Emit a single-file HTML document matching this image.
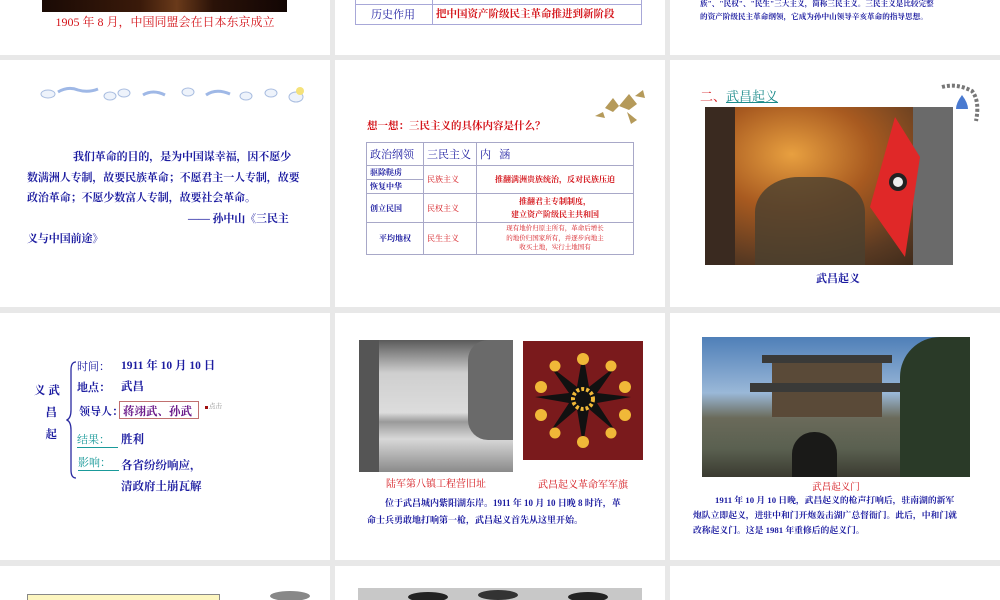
<!DOCTYPE html>
<html><head><meta charset="utf-8"><style>
*{margin:0;padding:0;box-sizing:border-box}
body{width:1000px;height:600px;background:#e8e8e8;position:relative;overflow:hidden;font-family:"Liberation Serif","Noto Serif CJK SC",serif}
.s{position:absolute;background:#fff;overflow:hidden}
.a{position:absolute;white-space:nowrap}
.b{font-weight:bold;color:#1c1ca0}
.r{color:#d4141a}
table{border-collapse:collapse;position:absolute}
td{border:1px solid #a8a8c8;padding:0 3px}
</style></head><body>
<!-- row 1 -->
<div class="s" style="left:0;top:0;width:330px;height:55px">
<div class="a" style="left:42px;top:0;width:245px;height:12px;background:linear-gradient(90deg,#1a0a05,#3a1a0a 40%,#6a3a1a 55%,#2a1208 70%,#120604)"></div>
<div class="a r" style="left:0;width:330px;text-align:center;top:13px;font-size:12px">1905 年 8 月，中国同盟会在日本东京成立</div>
</div>
<div class="s" style="left:335px;top:0;width:330px;height:55px">
<div class="a" style="left:20px;top:-2px;width:287px;height:27px;border:1px solid #a8a8d8"></div>
<div class="a" style="left:20px;top:4px;width:287px;border-top:1px solid #a8a8d8"></div>
<div class="a" style="left:97px;top:-2px;height:27px;border-left:1px solid #a8a8d8"></div>
<div class="a" style="left:36px;top:6px;font-size:11px;color:#1c1ca0">历史作用</div>
<div class="a r" style="left:101px;top:6px;font-size:10.5px;font-weight:bold">把中国资产阶级民主革命推进到新阶段</div>
</div>
<div class="s" style="left:670px;top:0;width:330px;height:55px">
<div class="a b" style="left:30px;top:-2px;font-size:7.6px;line-height:12.5px">族"、"民权"、"民生"三大主义，简称三民主义。三民主义是比较完整<br>的资产阶级民主革命纲领，它成为孙中山领导辛亥革命的指导思想。</div>
</div>
<!-- row 2 -->
<div class="s" style="left:0;top:60px;width:330px;height:247px">
<svg class="a" style="left:38px;top:22px" width="272" height="22">
<g fill="#eef3fb" stroke="#a9bde0" stroke-width="1">
<ellipse cx="10" cy="12" rx="7" ry="4"/><path d="M20 10 q10 -6 20 -2 q10 3 20 -1" fill="none" stroke="#9fb8e6" stroke-width="3"/>
<ellipse cx="72" cy="14" rx="6" ry="4"/><ellipse cx="86" cy="11" rx="6" ry="4"/>
<path d="M105 13 q10 -6 22 0" fill="none" stroke="#9fb8e6" stroke-width="3"/>
<ellipse cx="150" cy="10" rx="6" ry="4"/><path d="M168 13 q10 -7 24 -1" fill="none" stroke="#9fb8e6" stroke-width="3"/>
<ellipse cx="208" cy="14" rx="6" ry="4"/><ellipse cx="233" cy="11" rx="6" ry="4"/><ellipse cx="258" cy="15" rx="7" ry="5"/>
</g><circle cx="262" cy="9" r="4" fill="#f5e27a"/></svg>
<div class="a b" style="left:27px;top:87px;font-size:11px;line-height:20.5px;letter-spacing:-0.1px">
<div style="padding-left:46px">我们革命的目的，是为中国谋幸福，因不愿少</div>
<div>数满洲人专制，故要民族革命；不愿君主一人专制，故要</div>
<div>政治革命；不愿少数富人专制，故要社会革命。</div>
<div style="padding-left:161px">—— 孙中山《三民主</div>
<div>义与中国前途》</div></div>
</div>
<div class="s" style="left:335px;top:60px;width:330px;height:247px">
<svg class="a" style="left:256px;top:28px" width="58" height="38"><g fill="#b59a5a"><path d="M14 20 l8 -10 l6 8 l-6 6z"/><path d="M28 18 l10 -12 l8 10 l-8 6z"/><path d="M36 24 l10 8 l-6 4z"/><path d="M4 28 l8 -4 l2 6z"/><path d="M44 8 l8 -6 l2 8z"/></g></svg>
<div class="a r b" style="left:32px;top:58px;font-size:10.5px">想一想：三民主义的具体内容是什么？</div>
<table style="left:31px;top:82px;width:268px;font-family:inherit;font-size:8px">
<tr style="height:23px;font-size:11px;color:#1c1ca0"><td style="width:57px">政治纲领</td><td style="width:53px">三民主义</td><td>内&nbsp;&nbsp;&nbsp;涵</td></tr>
<tr style="height:14px"><td class="b">驱除鞑虏</td><td class="r" rowspan="2">民族主义</td><td class="r" rowspan="2" style="text-align:center;font-weight:bold">推翻满洲贵族统治，反对民族压迫</td></tr>
<tr style="height:14px"><td class="b">恢复中华</td></tr>
<tr style="height:29px"><td class="b">创立民国</td><td class="r">民权主义</td><td class="r" style="text-align:center;line-height:13px;font-weight:bold">推翻君主专制制度，<br>建立资产阶级民主共和国</td></tr>
<tr style="height:32px"><td class="b" style="text-align:center">平均地权</td><td class="r">民生主义</td><td class="r" style="text-align:center;font-size:6.5px;line-height:9.5px">现有地价归原主所有，革命后增长<br>的地价归国家所有，并逐步向地主<br>收买土地，实行土地国有</td></tr>
</table>
</div>
<div class="s" style="left:670px;top:60px;width:330px;height:247px">
<div class="a" style="left:30px;top:26px;font-size:13px"><span class="r">二、</span><span style="color:#1a8a8a;text-decoration:underline">武昌起义</span></div>
<svg class="a" style="left:270px;top:23px" width="42" height="40"><path d="M2 4 q15 -4 30 4 q8 10 4 30" fill="none" stroke="#777" stroke-width="4" stroke-dasharray="3 2"/><path d="M22 12 q-6 8 -6 14 h12 q0 -6 -6 -14z" fill="#4a7ad0"/></svg>
<div class="a" style="left:35px;top:47px;width:248px;height:158px;background:radial-gradient(ellipse at 35% 30%,#e8a040 0%,#a85a20 35%,#5a3a22 70%,#2e2218 100%)">
<div class="a" style="right:0;top:0;width:40px;height:158px;background:#6a6a6a"></div>
<div class="a" style="left:0;top:0;width:30px;height:158px;background:#3a2a20"></div>
<svg class="a" style="left:160px;top:10px" width="60" height="140"><path d="M30 0 L55 40 L40 140 L5 90 Z" fill="#e02828"/><circle cx="33" cy="65" r="9" fill="#222"/><circle cx="33" cy="65" r="5" fill="#eee"/></svg>
<div class="a" style="left:50px;top:70px;width:110px;height:88px;background:#4a4030;border-radius:40% 40% 0 0;opacity:.8"></div>
</div>
<div class="a b" style="left:0;width:336px;text-align:center;top:210px;font-size:11px">武昌起义</div>
</div>
<!-- row 3 -->
<div class="s" style="left:0;top:313px;width:330px;height:247px">
<div class="a b" style="left:34px;top:67px;font-size:11.5px;line-height:22px">义 武<br>&nbsp;&nbsp;&nbsp;&nbsp;昌<br>&nbsp;&nbsp;&nbsp;&nbsp;起</div>
<svg class="a" style="left:66px;top:48px" width="12" height="118"><path d="M10 1 q-5 0 -5 8 v40 q0 8 -4 10 q4 2 4 10 v40 q0 8 5 8" fill="none" stroke="#2a2aa0" stroke-width="1.3"/></svg>
<div class="a" style="left:77px;top:45px;font-size:11px;color:#1c1ca0">时间：</div>
<div class="a b" style="left:121px;top:44px;font-size:11.5px">1911 年 10 月 10 日</div>
<div class="a b" style="left:77px;top:66px;font-size:11px">地点：</div>
<div class="a b" style="left:121px;top:65px;font-size:11.5px">武昌</div>
<div class="a b" style="left:79px;top:90px;font-size:11px">领导人：</div>
<div class="a" style="left:119px;top:88px;width:80px;height:18px;border:1px solid #c07070"></div>
<div class="a b" style="left:123px;top:90px;font-size:11.5px;color:#6a1a8a">蒋翊武、孙武</div>
<div class="a" style="left:205px;top:93px;width:3px;height:3px;background:#a01010"></div>
<div class="a" style="left:209px;top:88px;font-size:6.5px;color:#888">点击</div>
<div class="a" style="left:77px;top:118px;font-size:11px;color:#1a9a9a;border-bottom:1px solid #1a9a9a;padding-right:8px">结果：</div>
<div class="a b" style="left:121px;top:118px;font-size:11.5px">胜利</div>
<div class="a" style="left:78px;top:141px;font-size:11px;color:#1a9a9a;border-bottom:1px solid #1a9a9a;padding-right:8px">影响：</div>
<div class="a b" style="left:121px;top:143px;font-size:11.5px;line-height:21px">各省纷纷响应，<br>清政府土崩瓦解</div>
</div>
<div class="s" style="left:335px;top:313px;width:330px;height:247px">
<div class="a" style="left:24px;top:27px;width:154px;height:132px;background:linear-gradient(180deg,#5a5a5a 0%,#cfcfcf 25%,#dcdcdc 55%,#9a9a9a 62%,#d8d8d8 75%,#8a8a8a 100%)">
<div class="a" style="left:0;top:0;width:20px;height:132px;background:#555"></div>
<div class="a" style="right:0;top:0;width:45px;height:100px;background:#6a6a6a;border-radius:20px 0 0 20px"></div>
</div>
<svg class="a" style="left:188px;top:28px" width="120" height="119"><rect width="120" height="119" fill="#7a1a1c"/>
<path d="M60 12 L66 46 L93 25 L74 52 L108 56 L74 62 L93 91 L66 68 L60 104 L54 68 L27 91 L46 62 L12 56 L46 52 L27 25 L54 46 Z" fill="#111"/>
<g fill="#f0b838"><circle cx="60" cy="18" r="6"/><circle cx="60" cy="101" r="6"/><circle cx="18" cy="46" r="6"/><circle cx="102" cy="46" r="6"/><circle cx="18" cy="74" r="6"/><circle cx="102" cy="74" r="6"/><circle cx="88" cy="25" r="5.5"/><circle cx="32" cy="25" r="5.5"/><circle cx="88" cy="92" r="5.5"/><circle cx="32" cy="92" r="5.5"/></g>
<circle cx="60" cy="58" r="10" fill="none" stroke="#f0b838" stroke-width="4" stroke-dasharray="3 2"/></svg>
<div class="a r" style="left:24px;width:154px;text-align:center;top:162px;font-size:10px">陆军第八镇工程营旧址</div>
<div class="a r" style="left:188px;width:120px;text-align:center;top:163px;font-size:10px">武昌起义革命军军旗</div>
<div class="a b" style="left:32px;top:182px;font-size:9px;line-height:17px"><span style="padding-left:18px">位于武昌城内紫阳湖东岸。1911 年 10 月 10 日晚 8 时许，革</span><br>命士兵勇敢地打响第一枪，武昌起义首先从这里开始。</div>
</div>
<div class="s" style="left:670px;top:313px;width:330px;height:247px">
<div class="a" style="left:32px;top:24px;width:268px;height:140px;background:linear-gradient(180deg,#4f7fb8 0%,#9ab8d8 40%,#6a6a5a 58%,#5a6050 80%,#3a3a30 100%)">
<div class="a" style="left:70px;top:20px;width:110px;height:60px;background:#5a4a38"></div>
<div class="a" style="left:60px;top:18px;width:130px;height:8px;background:#3a3a38"></div>
<div class="a" style="left:48px;top:46px;width:160px;height:9px;background:#3a3a38"></div>
<div class="a" style="left:90px;top:95px;width:45px;height:45px;background:#1a1a18;border-radius:22px 22px 0 0"></div>
<div class="a" style="right:0;top:0;width:70px;height:140px;background:#2a3a28;border-radius:40px 0 0 0"></div>
</div>
<div class="a r" style="left:0;width:332px;text-align:center;top:166px;font-size:9.5px">武昌起义门</div>
<div class="a b" style="left:23px;top:180px;font-size:8.8px;line-height:15px"><span style="padding-left:22px">1911 年 10 月 10 日晚，武昌起义的枪声打响后，驻南湖的新军</span><br>炮队立即起义，进驻中和门开炮轰击湖广总督衙门。此后，中和门就<br>改称起义门。这是 1981 年重修后的起义门。</div>
</div>
<!-- row 4 -->
<div class="s" style="left:0;top:566px;width:330px;height:34px">
<div class="a" style="left:27px;top:28px;width:193px;height:10px;background:#fdf6c0;border:1px solid #888"></div>
<div class="a" style="left:270px;top:25px;width:40px;height:10px;background:#888;border-radius:50%"></div>
</div>
<div class="s" style="left:335px;top:566px;width:330px;height:34px">
<div class="a" style="left:23px;top:22px;width:284px;height:12px;background:#c8c8c8"><div class="a" style="left:50px;top:4px;width:40px;height:10px;background:#222;border-radius:50%"></div><div class="a" style="left:120px;top:2px;width:40px;height:10px;background:#333;border-radius:50%"></div><div class="a" style="left:210px;top:4px;width:40px;height:10px;background:#222;border-radius:50%"></div></div>
</div>
<div class="s" style="left:670px;top:566px;width:330px;height:34px"></div>
</body></html>
